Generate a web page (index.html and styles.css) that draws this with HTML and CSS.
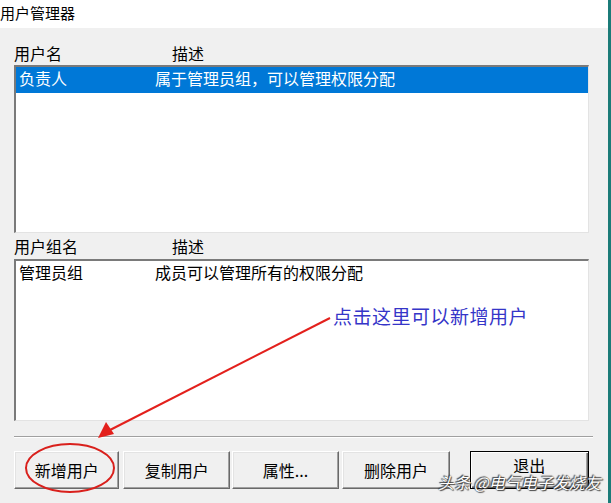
FILE: index.html
```html
<!DOCTYPE html>
<html lang="zh-CN">
<head>
  <meta charset="UTF-8">
  <title>用户管理器</title>
  <link rel="stylesheet" href="styles.css">
</head>
<body>

<div class="title">用户管理器</div>

<div class="panel">
  <div class="head">
    <span>用户名</span>
    <span>描述</span>
  </div>
  <div class="list list-users">
    <div class="row selected">
      <span>负责人</span>
      <span>属于管理员组，可以管理权限分配</span>
    </div>
  </div>

  <div class="head head-groups">
    <span>用户组名</span>
    <span>描述</span>
  </div>
  <div class="list list-groups">
    <div class="row">
      <span>管理员组</span>
      <span>成员可以管理所有的权限分配</span>
    </div>
  </div>

  <div class="sep"></div>

  <div class="buttons">
    <button class="btn b1">新增用户</button>
    <button class="btn b2">复制用户</button>
    <button class="btn b3">属性...</button>
    <button class="btn b4">删除用户</button>
    <button class="btn b5 default">退出</button>
  </div>
</div>

<!-- annotations drawn over the window -->
<svg class="marks" width="611" height="503" viewBox="0 0 611 503">
  <line x1="330" y1="318" x2="110" y2="430" stroke="#e3201c" stroke-width="2"/>
  <polygon points="98,438 106,422 114,434" fill="#e3201c"/>
  <ellipse cx="70" cy="468" rx="44" ry="24" fill="none" stroke="#d9201c" stroke-width="2"/>
</svg>
<div class="note">点击这里可以新增用户</div>
<div class="watermark">头条 @电气电子发烧友</div>

</body>
</html>
```

FILE: styles.css
```css
body { margin: 0; width: 608px; height: 503px; background: #f0f0f0; border-right: 3px solid #1b7b78; font-family: "Noto Sans CJK SC", "Liberation Sans", sans-serif; font-size: 16px; color: #000; overflow: hidden; position: relative; }
.title { height: 28px; background: #fff; font-size: 15px; line-height: 26px; padding-left: 0; }
.panel { padding: 0 19px 0 14px; }
.head { display: grid; grid-template-columns: 158px 1fr; height: 37px; line-height: 50px; }
.head-groups { height: 26px; line-height: 26px; }
.list { background: #fff; border-top: 2px solid #7a7a7a; border-left: 2px solid #7a7a7a; border-right: 1px solid #e3e3e3; border-bottom: 1px solid #e3e3e3; }
.list-users { height: 165px; }
.list-groups { height: 159px; }
.row { display: grid; grid-template-columns: 136px 1fr; height: 26px; line-height: 22px; padding-left: 3px; }
.selected { background: #0078d7; color: #fff; }
.sep { margin-top: 15px; width: 579px; border-top: 1px solid #a0a0a0; border-bottom: 1px solid #fff; }
.buttons { display: flex; margin-top: 13px; }
.btn { height: 38px; padding: 0; font-family: inherit; font-size: 16px; background: #f0f0f0; border: 1px solid; border-color: #fff #696969 #696969 #fff; box-shadow: inset -1px -1px 0 #a0a0a0, inset 1px 1px 0 #e3e3e3; color: #000; }
.b1 { width: 106px; }
.b2 { width: 107px; margin-left: 4px; }
.b3 { width: 108px; margin-left: 2px; }
.b4 { width: 108px; margin-left: 3px; }
.b5 { width: 120px; margin-left: 20px; line-height: 20px; padding-bottom: 10px; }
.default { border: 1px solid #000; box-shadow: inset 1px 1px 0 #fff, inset -1px -1px 0 #696969, inset -2px -2px 0 #a0a0a0; }
.marks { position: absolute; left: 0; top: 0; }
.note { position: absolute; left: 333px; top: 302px; font-size: 19px; color: #3535c8; letter-spacing: 0.5px; }
.watermark { position: absolute; left: 438px; top: 470px; font-size: 16px; color: #fff; font-style: italic; text-shadow: 0 0 1px #333, 1px 1px 1px #444, -1px -1px 1px #444; }
```
